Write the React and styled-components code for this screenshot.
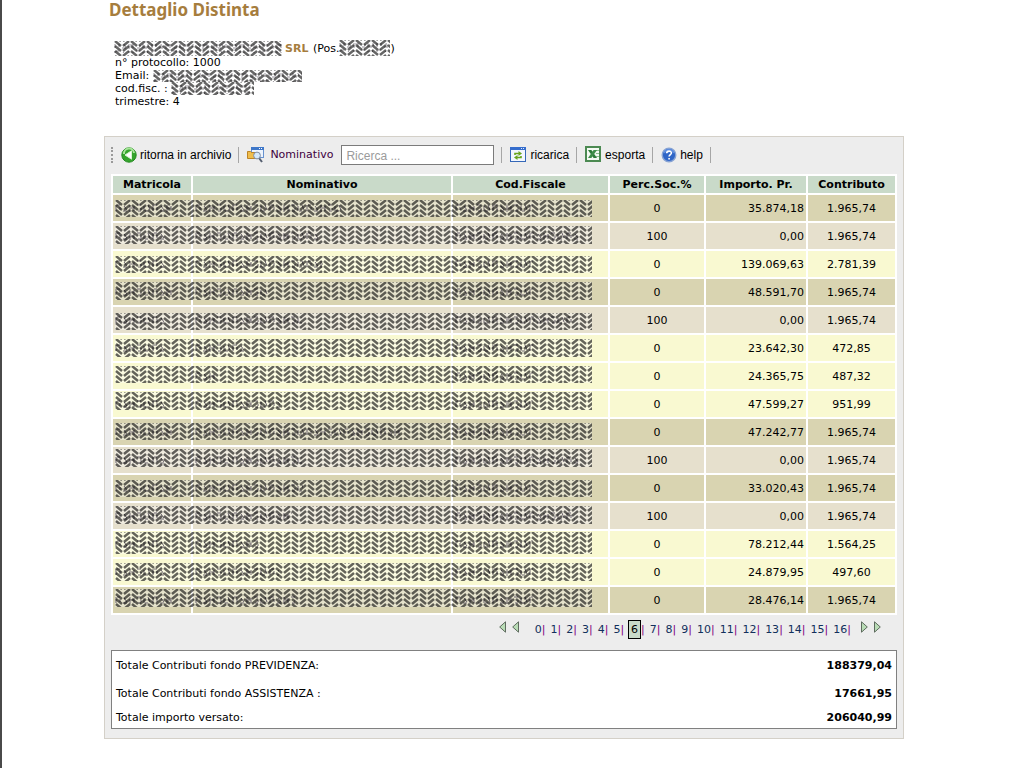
import React from "react";
import styled, { createGlobalStyle } from "styled-components";

const GlobalStyle = createGlobalStyle`
  *, *::before, *::after { box-sizing: border-box; }
  body {
    margin: 0;
    background: #fff;
    color: #000;
    font-family: "DejaVu Sans", Verdana, sans-serif;
    font-size: 11px;
    line-height: 13px;
  }
`;

const Page = styled.div`
  min-height: 100vh;
  border-left: 2px solid #4a4a4a;
  padding-right: 18px;
`;
const Content = styled.main`
  max-width: 800px;
  margin: 0 auto;
`;
const Title = styled.h1`
  margin: 0;
  padding-left: 5px;
  font: bold 17px/20px "Noto Sans", Tahoma, sans-serif;
  color: #a67d3d;
`;
const Info = styled.div`
  padding: 20px 0 0 11px;
  margin-bottom: 28px;
`;
const InfoLine = styled.div`
  display: flex;
  align-items: center;
  height: ${(p) => (p.$first ? 16 : 13)}px;
  margin-left: ${(p) => (p.$first ? -1 : 0)}px;
  white-space: pre;
`;
const Company = styled.strong`
  padding: 0 1px 0 3px;
  color: #a67d3d;
`;
const Panel = styled.section`
  background: #ededed;
  border: 1px solid #d4d0c8;
  padding: 0 6px 9px;
`;

const Toolbar = styled.div`
  display: flex;
  align-items: center;
  height: 35px;
  margin-bottom: 2px;
`;
const Grip = styled.span`
  width: 3px;
  height: 16px;
  margin-right: 7px;
  border-left: 2px dotted #9a9a9a;
`;
const ToolButton = styled.button`
  display: flex;
  align-items: center;
  gap: 3px;
  padding: 0;
  border: 0;
  background: none;
  color: #000;
  font: 12px/16px "Liberation Sans", Arial, sans-serif;
  white-space: nowrap;
`;
const Separator = styled.span`
  width: 1px;
  height: 16px;
  margin: 0 8px 0 7px;
  background: #a6a6a6;
`;
const SearchLabel = styled.label`
  display: flex;
  align-items: center;
  gap: 6px;
  margin-right: 8px;
  color: #400040;
`;
const SearchInput = styled.input`
  width: 153px;
  height: 20px;
  padding: 2px 4px 0;
  border: 1px solid #7b7b7b;
  border-radius: 0;
  background: #fff;
  font: 12px/16px "Liberation Sans", Arial, sans-serif;
  &::placeholder { color: #9b9b9b; opacity: 1; }
`;

const Table = styled.table`
  width: 100%;
  table-layout: fixed;
  border-collapse: separate;
  border-spacing: 2px;
  background: #fff;
`;
const Col = styled.col`
  width: ${(p) => p.$width};
`;
const HeadCell = styled.th`
  height: 17px;
  padding: 0;
  background: #c9dac9;
  font-weight: bold;
  white-space: nowrap;
`;
const tones = { a: "#d9d4b1", b: "#e6e0cd", c: "#f9f9d1" };
const Row = styled.tr`
  position: relative;
`;
const Cell = styled.td`
  height: 26px;
  padding: 0 2px;
  text-align: ${(p) => p.$align || "left"};
  background: ${(p) => tones[p.$tone]};
`;
const RowMask = styled.span`
  position: absolute;
  top: ${(p) => p.$top}px;
  left: 2px;
  width: 61%;
  height: ${(p) => p.$height}px;
`;
const Fill = styled.svg`
  display: block;
  flex: none;
  width: ${(p) => (p.$width ? p.$width + "px" : "100%")};
  height: ${(p) => (p.$height ? p.$height + "px" : "100%")};
`;
const Definitions = styled.svg`
  position: absolute;
  width: 0;
  height: 0;
`;

const Pager = styled.nav`
  display: flex;
  align-items: center;
  justify-content: flex-end;
  height: 35px;
  padding: 0 16px 7px 0;
`;
const PageItem = styled.span`
  display: flex;
  align-items: center;
  padding-right: 5px;
  color: #800080;
`;
const PageLink = styled.a`
  color: #12305c;
  text-decoration: none;
`;
const CurrentPage = styled.a`
  padding: 2px;
  margin-left: -1px;
  border: 1px solid #000;
  background: #c9dac9;
  color: #000;
  text-decoration: none;
`;
const Arrows = styled.span`
  display: flex;
  gap: 6px;
  margin: ${(p) => (p.$before ? "0 16px 4px 0" : "0 0 4px 5px")};
`;
const ArrowButton = styled.button`
  display: block;
  padding: 0;
  border: 0;
  background: none;
  line-height: 0;
`;

const Totals = styled.dl`
  margin: 0;
  border: 1px solid #808080;
  background: #fff;
`;
const TotalRow = styled.div`
  display: flex;
  align-items: center;
  justify-content: space-between;
  height: ${(p) => (p.$last ? 21 : 28)}px;
  padding: 0 4px;
`;
const Amount = styled.dd`
  margin: 0;
  font-weight: bold;
`;

function Patterns() {
  return (
    <Definitions aria-hidden="true">
      <defs>
        <pattern id="hatch" width="16" height="5" patternUnits="userSpaceOnUse">
          <rect width="16" height="5" fill="#fff" fillOpacity=".35" />
          <path
            d="M1-5 7 0M1 0 7 5M1 5 7 10M9 0 15-5M9 5 15 0M9 10 15 5"
            stroke="#000"
            strokeOpacity=".6"
            strokeWidth="2.5"
            fill="none"
          />
        </pattern>
        <pattern id="traces" width="37" height="9" patternUnits="userSpaceOnUse">
          <path
            d="M1 1v6M2 1h3M5 3v3M8 7h4M9 2l3 4M15 1v7M16 4h3M19 2v5M22 1h4M23 7h3M26 4v2M29 2v5M30 7h3M33 1l2 5"
            stroke="#1a101c"
            strokeWidth="1"
            fill="none"
          />
        </pattern>
      </defs>
    </Definitions>
  );
}

const Traces = ({ width }) => (
  <Fill $width={width} $height={9} aria-hidden="true">
    <rect width="100%" height="100%" fill="url(#traces)" />
  </Fill>
);
const Hatch = ({ width, height, traces }) => (
  <Fill $width={width} $height={height} aria-hidden="true">
    {traces && <rect y="3" width="100%" height="9" fill="url(#traces)" opacity=".7" />}
    <rect width="100%" height="100%" fill="url(#hatch)" />
  </Fill>
);

const BackIcon = () => (
  <svg width="16" height="16" viewBox="0 0 16 16" aria-hidden="true">
    <circle cx="8" cy="8" r="7.2" fill="#35a52d" stroke="#238a20" />
    <path d="M3 7a5 5 0 0 1 10-1" stroke="#a7e49a" strokeWidth="2" fill="none" />
    <path d="M10.5 3.8v8.4L4 8z" fill="#fff" stroke="#d8f3d2" strokeLinejoin="round" />
  </svg>
);
const FindIcon = () => (
  <svg width="17" height="17" viewBox="0 0 17 17" aria-hidden="true">
    <rect x="4.5" y="1.5" width="12" height="10" fill="#edf4fd" stroke="#6792cf" />
    <path d="M4 1h13v3H4z" fill="#3f78c9" />
    <path d="M12 2.5h1M14 2.5h1" stroke="#fff" />
    <path d="M.5 5.5h3l1 1H8v6H.5z" fill="#efbd4c" stroke="#bd8425" />
    <path d="m12 12 3 4" stroke="#555f70" strokeWidth="2" />
    <circle cx="10" cy="9.5" r="3.4" fill="#d5e9fa" stroke="#7f8ca2" />
  </svg>
);
const ReloadIcon = () => (
  <svg width="17" height="16" viewBox="0 0 17 16" aria-hidden="true">
    <rect x=".5" y=".5" width="15" height="14" fill="#f2f7ff" stroke="#3568b8" />
    <path d="M0 0h16v3H0z" fill="#356dcc" />
    <path d="M11 1.5h1M13 1.5h1" stroke="#dce9ff" />
    <path d="M5 8V6.5h4" stroke="#68a51e" strokeWidth="1.6" fill="none" />
    <path d="M8.5 4 12 6.5 8.5 9z" fill="#68a51e" />
    <path d="M11 9v1.5H7" stroke="#68a51e" strokeWidth="1.6" fill="none" />
    <path d="M7.5 8 4 10.5 7.5 13z" fill="#68a51e" />
  </svg>
);
const ExcelIcon = () => (
  <svg width="17" height="17" viewBox="0 0 17 17" aria-hidden="true">
    <rect x="1" y="1" width="14" height="14" fill="#f4faf3" stroke="#4c8a52" strokeWidth="2" />
    <path d="M11 4.5h3M11 7.5h3M11 10.5h3" stroke="#8bbf8d" />
    <path d="M3 4h3.4l5.6 8H8.6z" fill="#2c7a38" />
    <path d="M8.6 4H12l-5.6 8H3z" fill="#3f8d49" />
  </svg>
);
const HelpIcon = () => (
  <svg width="16" height="16" viewBox="0 0 16 16" aria-hidden="true">
    <circle cx="8" cy="8" r="6.8" fill="#2e65c7" stroke="#87a3d4" strokeWidth="1.4" />
    <path d="M3 6a5.5 5.5 0 0 1 10 0" stroke="#5f8fe0" strokeWidth="1.6" fill="none" />
    <path d="M5.7 6.3C5.7 3.4 10.5 3.4 10.4 6c0 1.6-2.3 1.5-2.3 3.5M8.1 11v1.5" stroke="#fff" strokeWidth="1.6" fill="none" />
  </svg>
);
const Arrow = ({ left, label }) => (
  <ArrowButton type="button" aria-label={label}>
    <svg width="7" height="12" viewBox="0 0 7 12" aria-hidden="true">
      <path d={left ? "M6.5 .8v10.4L.7 6z" : "M.5 .8v10.4L6.3 6z"} fill="#b9dcb6" stroke="#5e6b5e" />
    </svg>
  </ArrowButton>
);

const columns = [
  ["Matricola", "78px"],
  ["Nominativo", "auto"],
  ["Cod.Fiscale", "155px"],
  ["Perc.Soc.%", "94px"],
  ["Importo. Pr.", "100px"],
  ["Contributo", "87px"],
];

// tone, share, amount, contribution, widths of the masked values, mask top and height
const rows = [
  ["a", "0", "35.874,18", "1.965,74", [57, 148, 78], 5, 17],
  ["b", "100", "0,00", "1.965,74", [49, 124, 125], 3, 18],
  ["c", "0", "139.069,63", "2.781,39", [49, 128, 78], 5, 17],
  ["a", "0", "48.591,70", "1.965,74", [57, 73, 78], 3, 18],
  ["b", "100", "0,00", "1.965,74", [49, 107, 118], 6, 17],
  ["c", "0", "23.642,30", "472,85", [49, 50, 78], 4, 18],
  ["c", "0", "24.365,75", "487,32", [0, 20, 78], 3, 17],
  ["c", "0", "47.599,27", "951,99", [49, 85, 78], 1, 18],
  ["a", "0", "47.242,77", "1.965,74", [57, 208, 78], 4, 17],
  ["b", "100", "0,00", "1.965,74", [49, 107, 124], 2, 18],
  ["a", "0", "33.020,43", "1.965,74", [57, 108, 78], 5, 17],
  ["b", "100", "0,00", "1.965,74", [49, 97, 120], 3, 18],
  ["c", "0", "78.212,44", "1.564,25", [49, 65, 78], 1, 22],
  ["c", "0", "24.879,95", "497,60", [49, 84, 78], 4, 18],
  ["a", "0", "28.476,14", "1.965,74", [57, 100, 78], 2, 18],
];

const totals = [
  ["Totale Contributi fondo PREVIDENZA:", "188379,04"],
  ["Totale Contributi fondo ASSISTENZA :", "17661,95"],
  ["Totale importo versato:", "206040,99"],
];

export default function App() {
  return (
    <Page>
      <GlobalStyle />
      <Patterns />
      <Content>
        <Title>Dettaglio Distinta</Title>
        <Info>
          <InfoLine $first>
            <Hatch width={168} height={15} traces />
            <Company>SRL</Company> (Pos.
            <Hatch width={51} height={16} traces />)
          </InfoLine>
          <InfoLine>n° protocollo: 1000</InfoLine>
          <InfoLine>
            {"Email: "}
            <Hatch width={149} height={12} traces />
          </InfoLine>
          <InfoLine>
            {"cod.fisc. : "}
            <Hatch width={83} height={13} traces />
          </InfoLine>
          <InfoLine>trimestre: 4</InfoLine>
        </Info>

        <Panel>
          <Toolbar>
            <Grip />
            <ToolButton type="button"><BackIcon />ritorna in archivio</ToolButton>
            <Separator />
            <SearchLabel htmlFor="search"><FindIcon />Nominativo</SearchLabel>
            <SearchInput id="search" type="text" placeholder="Ricerca ..." />
            <Separator />
            <ToolButton type="button"><ReloadIcon />ricarica</ToolButton>
            <Separator />
            <ToolButton type="button"><ExcelIcon />esporta</ToolButton>
            <Separator />
            <ToolButton type="button"><HelpIcon />help</ToolButton>
            <Separator />
          </Toolbar>

          <Table>
            <colgroup>
              {columns.map(([name, width]) => <Col key={name} $width={width} />)}
            </colgroup>
            <thead>
              <tr>
                {columns.map(([name]) => <HeadCell key={name} scope="col">{name}</HeadCell>)}
              </tr>
            </thead>
            <tbody>
              {rows.map(([tone, share, amount, contribution, widths, top, height], i) => (
                <Row key={i}>
                  {widths.map((width, n) => (
                    <Cell key={n} $tone={tone}>
                      {width > 0 && <Traces width={width} />}
                      {n === 2 && (
                        <RowMask $top={top} $height={height}><Hatch /></RowMask>
                      )}
                    </Cell>
                  ))}
                  <Cell $tone={tone} $align="center">{share}</Cell>
                  <Cell $tone={tone} $align="right">{amount}</Cell>
                  <Cell $tone={tone} $align="center">{contribution}</Cell>
                </Row>
              ))}
            </tbody>
          </Table>

          <Pager aria-label="Pagine">
            <Arrows $before>
              <Arrow left label="Prima pagina" />
              <Arrow left label="Pagina precedente" />
            </Arrows>
            {Array.from({ length: 17 }, (_, n) => (
              <PageItem key={n}>
                {n === 6
                  ? <CurrentPage href="#6" aria-current="page">6</CurrentPage>
                  : <PageLink href={"#" + n}>{n}</PageLink>}
                |
              </PageItem>
            ))}
            <Arrows>
              <Arrow label="Pagina successiva" />
              <Arrow label="Ultima pagina" />
            </Arrows>
          </Pager>

          <Totals>
            {totals.map(([label, value], i) => (
              <TotalRow key={label} $last={i === 2}>
                <dt>{label}</dt>
                <Amount>{value}</Amount>
              </TotalRow>
            ))}
          </Totals>
        </Panel>
      </Content>
    </Page>
  );
}
